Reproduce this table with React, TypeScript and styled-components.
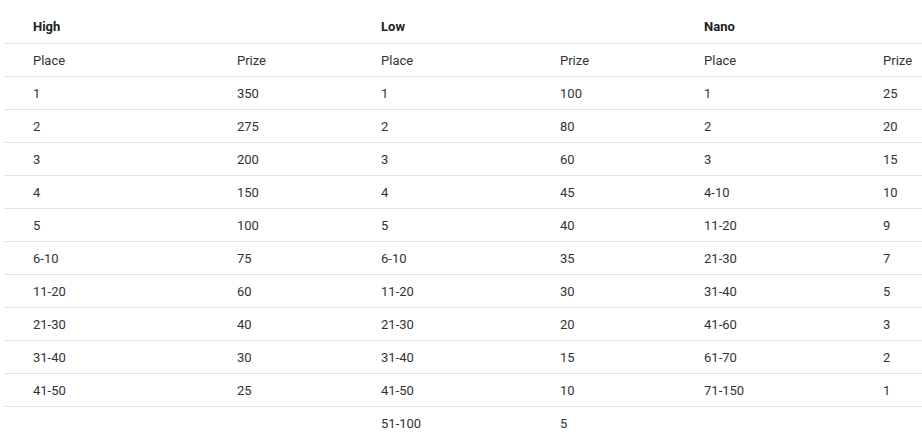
import React from "react";
import styled, { createGlobalStyle } from "styled-components";

const Global = createGlobalStyle`
  html, body { margin: 0; padding: 0; background: #fff; }
  body { font-family: Roboto, "Noto Sans", Arial, sans-serif; }
`;

const Wrap = styled.div`
  padding: 10px 0 0 4px;
`;

const Table = styled.table`
  width: 918px;
  table-layout: fixed;
  border-collapse: separate;
  border-spacing: 0;
  font-size: 13px;
  color: #333;
`;

const Row = styled.tr<{ $first?: boolean }>`
  & > td, & > th {
    border-top: ${(p) => (p.$first ? "none" : "1px solid #e2e2e2")};
    height: ${(p) => (p.$first ? "33px" : "32px")};
  }
`;

const Cell = styled.td`
  padding: 0 0 0 29px;
  vertical-align: middle;
  text-align: left;
  white-space: nowrap;
  line-height: 15px;
  font-weight: 400;
`;

const Head = styled.th`
  padding: 0 0 0 29px;
  vertical-align: middle;
  text-align: left;
  font-weight: 700;
  color: #222;
  line-height: 15px;
`;

const widths = [204, 144, 179, 144, 179, 68];

const high: [string, string][] = [
  ["1", "350"], ["2", "275"], ["3", "200"], ["4", "150"], ["5", "100"],
  ["6-10", "75"], ["11-20", "60"], ["21-30", "40"], ["31-40", "30"], ["41-50", "25"],
];
const low: [string, string][] = [
  ["1", "100"], ["2", "80"], ["3", "60"], ["4", "45"], ["5", "40"],
  ["6-10", "35"], ["11-20", "30"], ["21-30", "20"], ["31-40", "15"], ["41-50", "10"], ["51-100", "5"],
];
const nano: [string, string][] = [
  ["1", "25"], ["2", "20"], ["3", "15"], ["4-10", "10"], ["11-20", "9"],
  ["21-30", "7"], ["31-40", "5"], ["41-60", "3"], ["61-70", "2"], ["71-150", "1"],
];

export default function App() {
  const n = Math.max(high.length, low.length, nano.length);
  const rows = Array.from({ length: n }, (_, i) => [high[i], low[i], nano[i]]);
  return (
    <Wrap>
      <Global />
      <Table>
        <colgroup>
          {widths.map((w, i) => (
            <col key={i} style={{ width: w }} />
          ))}
        </colgroup>
        <thead>
          <Row $first>
            <Head colSpan={2}>High</Head>
            <Head colSpan={2}>Low</Head>
            <Head colSpan={2}>Nano</Head>
          </Row>
        </thead>
        <tbody>
          <Row>
            <Cell>Place</Cell>
            <Cell>Prize</Cell>
            <Cell>Place</Cell>
            <Cell>Prize</Cell>
            <Cell>Place</Cell>
            <Cell>Prize</Cell>
          </Row>
          {rows.map((r, i) => (
            <Row key={i}>
              {r.map((pair, j) => (
                <React.Fragment key={j}>
                  <Cell>{pair ? pair[0] : ""}</Cell>
                  <Cell>{pair ? pair[1] : ""}</Cell>
                </React.Fragment>
              ))}
            </Row>
          ))}
        </tbody>
      </Table>
    </Wrap>
  );
}
